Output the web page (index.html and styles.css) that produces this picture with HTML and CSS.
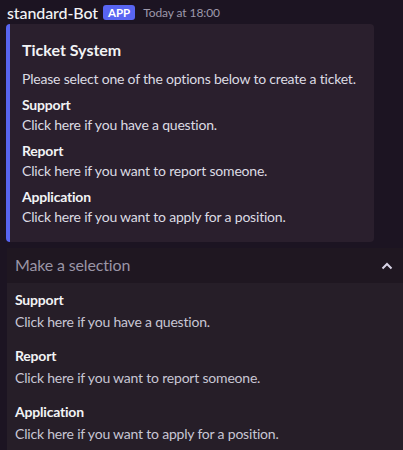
FILE: index.html
```html
<!DOCTYPE html>
<html>
<head>
<meta charset="utf-8">
<link rel="stylesheet" href="styles.css">
</head>
<body>
<div class="message">
  <div class="header">
    <span class="username">standard-Bot</span>
    <span class="badge">APP</span>
    <span class="timestamp">Today at 18:00</span>
  </div>
  <div class="embed">
    <div class="embed-title">Ticket System</div>
    <div class="embed-desc">Please select one of the options below to create a ticket.</div>
    <div class="field">
      <div class="field-name">Support</div>
      <div class="field-value">Click here if you have a question.</div>
    </div>
    <div class="field">
      <div class="field-name">Report</div>
      <div class="field-value">Click here if you want to report someone.</div>
    </div>
    <div class="field">
      <div class="field-name">Application</div>
      <div class="field-value">Click here if you want to apply for a position.</div>
    </div>
  </div>
  <div class="select">
    <div class="select-head">
      <span class="placeholder">Make a selection</span>
      <svg class="chevron" width="12" height="8" viewBox="0 0 12 8"><path d="M1.5 6.5 L6 2 L10.5 6.5" fill="none" stroke="#d8d4e6" stroke-width="2"/></svg>
    </div>
    <div class="options">
      <div class="option">
        <div class="opt-name">Support</div>
        <div class="opt-desc">Click here if you have a question.</div>
      </div>
      <div class="option">
        <div class="opt-name">Report</div>
        <div class="opt-desc">Click here if you want to report someone.</div>
      </div>
      <div class="option">
        <div class="opt-name">Application</div>
        <div class="opt-desc">Click here if you want to apply for a position.</div>
      </div>
    </div>
  </div>
</div>
</body>
</html>
```
FILE: styles.css
```css
html, body {
  margin: 0;
  padding: 0;
  background: #1c1422;
  height: 450px;
  overflow: hidden;
}
body {
  font-family: "Lato", "Liberation Sans", sans-serif;
  color: #dcdbe3;
}
.message {
  padding: 0 0 0 6px;
}
.header {
  display: flex;
  align-items: center;
  height: 24px;
  padding-left: 1px;
}
.username {
  font-size: 16px;
  font-weight: 500;
  color: #f2f3f5;
  letter-spacing: -0.1px;
}
.badge {
  margin-left: 5px;
  background: #5865f2;
  color: #ffffff;
  font-size: 11.5px;
  font-weight: 700;
  padding: 0 5px;
  height: 15px;
  line-height: 15px;
  border-radius: 3px;
}
.timestamp {
  margin-left: 8px;
  font-size: 12px;
  color: #9d98ab;
  letter-spacing: -0.1px;
}
.embed {
  width: 368px;
  box-sizing: border-box;
  background: #2a1f2d;
  border-left: 4px solid #5865f2;
  border-radius: 4px;
  padding: 15px 12px 15px 12px;
}
.embed-title {
  font-size: 16px;
  font-weight: 700;
  color: #f2f3f5;
  line-height: 22px;
  margin-bottom: 8px;
}
.embed-desc,
.field-name,
.field-value,
.opt-name,
.opt-desc {
  font-size: 14px;
  letter-spacing: -0.2px;
}
.embed-desc {
  line-height: 20px;
  color: #dcdbe3;
  white-space: nowrap;
}
.field {
  margin-top: 6px;
}
.field-name {
  font-weight: 700;
  line-height: 20px;
  color: #f2f3f5;
}
.field-value {
  line-height: 20px;
  color: #dcdbe3;
}
.select {
  margin-top: 6px;
  margin-left: 1px;
}
.select-head {
  height: 35px;
  box-sizing: border-box;
  background: #1f1721;
  display: flex;
  align-items: center;
  justify-content: space-between;
  padding: 0 10px 3px 8px;
}
.chevron {
  margin-top: 3px;
}
.placeholder {
  font-size: 16px;
  color: #9a95a6;
  letter-spacing: -0.15px;
}
.options {
  background: #261e28;
  height: 167px;
  overflow: hidden;
}
.option {
  height: 56px;
  padding: 7px 8px 0 8px;
  box-sizing: border-box;
}
.opt-name {
  font-weight: 700;
  color: #f2f3f5;
  line-height: 20px;
}
.opt-desc {
  line-height: 24px;
  color: #c8c6d4;
}
```
